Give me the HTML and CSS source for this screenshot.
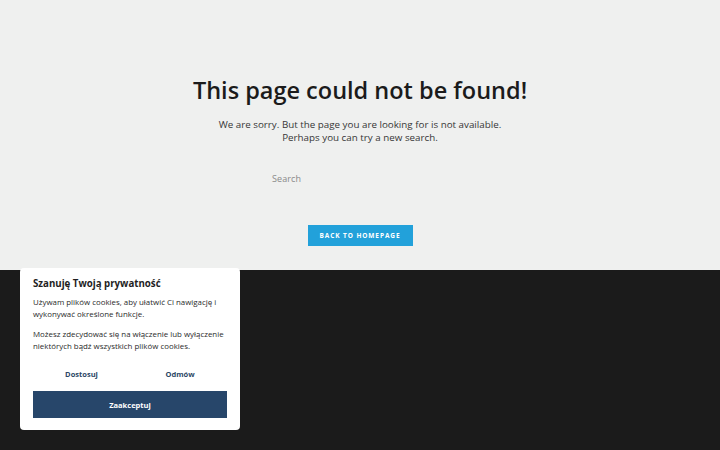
FILE: index.html
```html
<!DOCTYPE html>
<html lang="pl">
<head>
<meta charset="utf-8">
<link rel="stylesheet" href="styles.css">
</head>
<body>
<main class="notfound">
  <h1 class="title">This page could not be found!</h1>
  <p class="lead">We are sorry. But the page you are looking for is not available.<br>Perhaps you can try a new search.</p>
  <form class="search"><span class="search-input">Search</span></form>
  <a class="btn-home" href="#">BACK TO HOMEPAGE</a>
</main>
<footer class="footer"></footer>
<div class="cookie">
  <h2 class="cookie-title">Szanuję Twoją prywatność</h2>
  <p class="cookie-text">Używam plików cookies, aby ułatwić Ci nawigację i wykonywać określone funkcje.</p>
  <p class="cookie-text">Możesz zdecydować się na włączenie lub wyłączenie niektórych bądź wszystkich plików cookies.</p>
  <div class="cookie-links">
    <span class="cookie-link">Dostosuj</span>
    <span class="cookie-link">Odmów</span>
  </div>
  <div class="cookie-accept">Zaakceptuj</div>
</div>
</body>
</html>
```
FILE: styles.css
```css
* { box-sizing: border-box; }
html, body { margin: 0; padding: 0; }
body {
  width: 720px;
  height: 450px;
  overflow: hidden;
  font-family: "Open Sans", "Liberation Sans", sans-serif;
  background: #1b1b1b;
  position: relative;
}
.notfound {
  background: #eff0ef;
  height: 270px;
  display: flex;
  flex-direction: column;
  align-items: center;
  padding-top: 74px;
}
.title {
  margin: 0;
  font-weight: 600;
  font-size: 23.5px;
  line-height: 32px;
  color: #1b1b1b;
  letter-spacing: 0;
}
.lead {
  margin: 12px 0 0;
  font-size: 9.8px;
  line-height: 13px;
  color: #363636;
  text-align: center;
  letter-spacing: 0;
}
.search {
  width: 176px;
  margin-top: 21px;
  height: 40px;
}
.search-input {
  font-size: 9px;
  color: #8a8a8a;
  letter-spacing: 0.1px;
}
.btn-home {
  display: flex;
  align-items: center;
  justify-content: center;
  width: 105px;
  height: 21px;
  background: #22a1da;
  color: #ffffff;
  font-size: 6.5px;
  font-weight: 700;
  letter-spacing: 0.9px;
  text-decoration: none;
  margin-top: 20px;
}
.footer { height: 180px; }
.cookie {
  position: absolute;
  left: 20px;
  top: 268px;
  width: 220px;
  height: 162px;
  background: #ffffff;
  border-radius: 4px;
  padding: 9px 13px 0;
}
.cookie-title {
  margin: 0;
  font-size: 9.7px;
  font-weight: 700;
  color: #1e1e1e;
  line-height: 14px;
  letter-spacing: 0;
}
.cookie-text {
  margin: 5px 0 0;
  font-size: 7.9px;
  line-height: 12px;
  color: #2b2b2b;
  letter-spacing: 0;
}
.cookie-text + .cookie-text { margin-top: 8px; }
.cookie-links {
  display: flex;
  margin-top: 17px;
}
.cookie-link {
  flex: 1;
  text-align: center;
  font-size: 7.5px;
  font-weight: 700;
  color: #2c4766;
}
.cookie-link:first-child { flex: 0 0 97px; }
.cookie-link:last-child { padding-left: 3px; }
.cookie-accept {
  margin-top: 12px;
  height: 27px;
  background: #27466a;
  color: #ffffff;
  font-size: 7.5px;
  font-weight: 700;
  display: flex;
  align-items: center;
  justify-content: center;
}
```
